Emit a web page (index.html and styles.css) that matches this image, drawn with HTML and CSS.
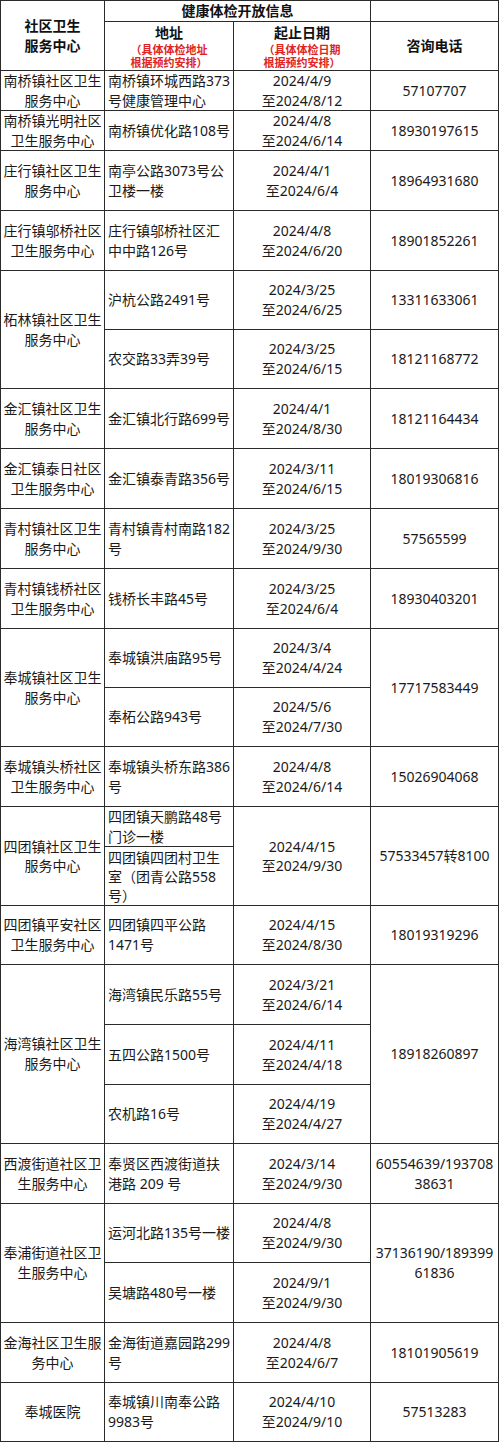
FILE: index.html
```html
<!DOCTYPE html>
<html lang="zh-CN">
<head>
<meta charset="utf-8">
<title>健康体检开放信息</title>
<link rel="stylesheet" href="styles.css">
</head>
<body>
<table class="sheet">
  <colgroup>
    <col class="c-name">
    <col class="c-addr">
    <col class="c-date">
    <col class="c-tel">
  </colgroup>
  <thead>
    <tr class="h21">
      <th rowspan="2" class="name">社区卫生<br>服务中心</th>
      <th colspan="2" class="group">健康体检开放信息</th>
      <th class="blank"></th>
    </tr>
    <tr class="h49">
      <th class="sub">地址<span class="note">（具体体检地址<br>根据预约安排）</span></th>
      <th class="sub">起止日期<span class="note">（具体体检日期<br>根据预约安排）</span></th>
      <th class="tel">咨询电话</th>
    </tr>
  </thead>
  <tbody>
    <tr class="h40">
      <td class="name">南桥镇社区卫生服务中心</td>
      <td class="addr">南桥镇环城西路373号健康管理中心</td>
      <td class="date">2024/4/9<br>至2024/8/12</td>
      <td class="tel">57107707</td>
    </tr>
    <tr class="h40">
      <td class="name">南桥镇光明社区卫生服务中心</td>
      <td class="addr">南桥镇优化路108号</td>
      <td class="date">2024/4/8<br>至2024/6/14</td>
      <td class="tel">18930197615</td>
    </tr>
    <tr class="h60">
      <td class="name">庄行镇社区卫生服务中心</td>
      <td class="addr">南亭公路3073号公卫楼一楼</td>
      <td class="date">2024/4/1<br>至2024/6/4</td>
      <td class="tel">18964931680</td>
    </tr>
    <tr class="h60">
      <td class="name">庄行镇邬桥社区卫生服务中心</td>
      <td class="addr">庄行镇邬桥社区汇中中路126号</td>
      <td class="date">2024/4/8<br>至2024/6/20</td>
      <td class="tel">18901852261</td>
    </tr>
    <tr class="h59">
      <td class="name" rowspan="2">柘林镇社区卫生服务中心</td>
      <td class="addr">沪杭公路2491号</td>
      <td class="date">2024/3/25<br>至2024/6/25</td>
      <td class="tel">13311633061</td>
    </tr>
    <tr class="h59">
      <td class="addr">农交路33弄39号</td>
      <td class="date">2024/3/25<br>至2024/6/15</td>
      <td class="tel">18121168772</td>
    </tr>
    <tr class="h60">
      <td class="name">金汇镇社区卫生服务中心</td>
      <td class="addr">金汇镇北行路699号</td>
      <td class="date">2024/4/1<br>至2024/8/30</td>
      <td class="tel">18121164434</td>
    </tr>
    <tr class="h60">
      <td class="name">金汇镇泰日社区卫生服务中心</td>
      <td class="addr">金汇镇泰青路356号</td>
      <td class="date">2024/3/11<br>至2024/6/15</td>
      <td class="tel">18019306816</td>
    </tr>
    <tr class="h60">
      <td class="name">青村镇社区卫生服务中心</td>
      <td class="addr">青村镇青村南路182号</td>
      <td class="date">2024/3/25<br>至2024/9/30</td>
      <td class="tel">57565599</td>
    </tr>
    <tr class="h60">
      <td class="name">青村镇钱桥社区卫生服务中心</td>
      <td class="addr">钱桥长丰路45号</td>
      <td class="date">2024/3/25<br>至2024/6/4</td>
      <td class="tel">18930403201</td>
    </tr>
    <tr class="h59">
      <td class="name" rowspan="2">奉城镇社区卫生服务中心</td>
      <td class="addr">奉城镇洪庙路95号</td>
      <td class="date">2024/3/4<br>至2024/4/24</td>
      <td class="tel" rowspan="2">17717583449</td>
    </tr>
    <tr class="h59">
      <td class="addr">奉柘公路943号</td>
      <td class="date">2024/5/6<br>至2024/7/30</td>
    </tr>
    <tr class="h60">
      <td class="name">奉城镇头桥社区卫生服务中心</td>
      <td class="addr">奉城镇头桥东路386号</td>
      <td class="date">2024/4/8<br>至2024/6/14</td>
      <td class="tel">15026904068</td>
    </tr>
    <tr class="h40">
      <td class="name" rowspan="2">四团镇社区卫生服务中心</td>
      <td class="addr">四团镇天鹏路48号门诊一楼</td>
      <td class="date" rowspan="2">2024/4/15<br>至2024/9/30</td>
      <td class="tel" rowspan="2">57533457转8100</td>
    </tr>
    <tr class="h59">
      <td class="addr tight">四团镇四团村卫生室（团青公路558号）</td>
    </tr>
    <tr class="h59">
      <td class="name">四团镇平安社区卫生服务中心</td>
      <td class="addr">四团镇四平公路1471号</td>
      <td class="date">2024/4/15<br>至2024/8/30</td>
      <td class="tel">18019319296</td>
    </tr>
    <tr class="h60">
      <td class="name" rowspan="3">海湾镇社区卫生服务中心</td>
      <td class="addr">海湾镇民乐路55号</td>
      <td class="date">2024/3/21<br>至2024/6/14</td>
      <td class="tel" rowspan="3">18918260897</td>
    </tr>
    <tr class="h60">
      <td class="addr">五四公路1500号</td>
      <td class="date">2024/4/11<br>至2024/4/18</td>
    </tr>
    <tr class="h59">
      <td class="addr">农机路16号</td>
      <td class="date">2024/4/19<br>至2024/4/27</td>
    </tr>
    <tr class="h60">
      <td class="name">西渡街道社区卫生服务中心</td>
      <td class="addr">奉贤区西渡街道扶港路 209 号</td>
      <td class="date">2024/3/14<br>至2024/9/30</td>
      <td class="tel">60554639/19370838631</td>
    </tr>
    <tr class="h59">
      <td class="name" rowspan="2">奉浦街道社区卫生服务中心</td>
      <td class="addr">运河北路135号一楼</td>
      <td class="date">2024/4/8<br>至2024/9/30</td>
      <td class="tel" rowspan="2">37136190/18939961836</td>
    </tr>
    <tr class="h60">
      <td class="addr">吴塘路480号一楼</td>
      <td class="date">2024/9/1<br>至2024/9/30</td>
    </tr>
    <tr class="h60">
      <td class="name">金海社区卫生服务中心</td>
      <td class="addr">金海街道嘉园路299号</td>
      <td class="date">2024/4/8<br>至2024/6/7</td>
      <td class="tel">18101905619</td>
    </tr>
    <tr class="h59">
      <td class="name">奉城医院</td>
      <td class="addr">奉城镇川南奉公路9983号</td>
      <td class="date">2024/4/10<br>至2024/9/10</td>
      <td class="tel">57513283</td>
    </tr>
  </tbody>
</table>
</body>
</html>
```
FILE: styles.css
```css
html, body {
  margin: 0;
  padding: 0;
  background: #ffffff;
}

body {
  font-family: "Noto Sans", "Noto Sans CJK SC", sans-serif;
  font-size: 14px;
  line-height: 20px;
  color: #1a1a1a;
}

.sheet {
  border-collapse: collapse;
  table-layout: fixed;
  width: 499px;
}

.c-name { width: 104px; }
.c-addr { width: 129px; }
.c-date { width: 137px; }
.c-tel  { width: 128px; }

.sheet th,
.sheet td {
  border: 1px solid #2b2b2b;
  padding: 0 1px;
  vertical-align: middle;
  text-align: center;
  overflow: visible;
}

.sheet th {
  font-weight: 700;
  color: #111111;
}

.sheet .note {
  display: block;
  color: #e02424;
  font-size: 11px;
  line-height: 13px;
  font-weight: 700;
}

.sheet td.addr {
  text-align: left;
  padding: 0 2px 0 3px;
}

.sheet td.addr.tight {
  line-height: 19px;
}

.sheet td.tel {
  padding: 0 3px;
  word-break: break-all;
}

/* row heights (the collapsed border is included) */
.h21 { height: 21px; }
.h49 { height: 49px; }
.h59 { height: 59px; }
.h60 { height: 60px; }

/* two-line rows only 40px tall: slightly tighter line boxes so the border fits */
.h40 { height: 40px; }
.h40 td { line-height: 19.5px; }
```
